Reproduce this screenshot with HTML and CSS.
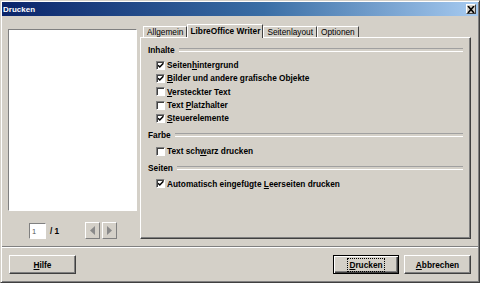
FILE: index.html
```html
<!DOCTYPE html>
<html lang="de">
<head>
<meta charset="utf-8">
<title>Drucken</title>
<link rel="stylesheet" href="styles.css">
</head>
<body>
<div class="window">
  <div class="titlebar">
    <span class="title">Drucken</span>
    <span class="close"><svg width="8" height="7" viewBox="0 0 8 7"><path d="M1 0l6 7M7 0l-6 7" stroke="#000" stroke-width="1.6"/></svg></span>
  </div>
  <div class="main">
    <div class="left">
      <div class="preview"></div>
      <div class="pager">
        <span class="pageinput">1</span>
        <span class="pagecount">/ 1</span>
        <span class="navbtn"><svg width="5" height="9" viewBox="0 0 5 9"><path d="M5 0v9L0 4.5z" fill="#8a8a8a"/></svg></span>
        <span class="navbtn"><svg width="5" height="9" viewBox="0 0 5 9"><path d="M0 0v9L5 4.5z" fill="#8a8a8a"/></svg></span>
      </div>
    </div>
    <div class="right">
      <div class="tabs">
        <span class="tab">Allgemein</span>
        <span class="tab active">LibreOffice Writer</span>
        <span class="tab">Seitenlayout</span>
        <span class="tab">Optionen</span>
      </div>
      <div class="panel">
        <div class="section">
          <div class="heading">Inhalte</div>
          <div class="row"><span class="cb checked"></span><span>Seiten<u>h</u>intergrund</span></div>
          <div class="row"><span class="cb checked"></span><span><u>B</u>ilder und andere grafische Objekte</span></div>
          <div class="row"><span class="cb"></span><span><u>V</u>ersteckter Text</span></div>
          <div class="row"><span class="cb"></span><span>Text <u>P</u>latzhalter</span></div>
          <div class="row"><span class="cb checked"></span><span><u>S</u>teuerelemente</span></div>
        </div>
        <div class="section">
          <div class="heading">Farbe</div>
          <div class="row"><span class="cb"></span><span>Text sch<u>w</u>arz drucken</span></div>
        </div>
        <div class="section">
          <div class="heading">Seiten</div>
          <div class="row"><span class="cb checked"></span><span>Automatisch eingefügte <u>L</u>eerseiten drucken</span></div>
        </div>
      </div>
    </div>
  </div>
  <div class="separator"></div>
  <div class="buttons">
    <span class="btn"><span><u>H</u>ilfe</span></span>
    <span class="spacer"></span>
    <span class="btn default"><span class="focus"><u>D</u>rucken</span></span>
    <span class="btn"><span><u>A</u>bbrechen</span></span>
  </div>
</div>
</body>
</html>
```
FILE: styles.css
```css
* { box-sizing: border-box; }
html, body { margin: 0; padding: 0; }
body {
  width: 480px;
  height: 283px;
  overflow: hidden;
  background: #d4d0c8;
  font-family: "Liberation Sans", Arial, sans-serif;
  font-size: 8.3px;
  color: #000;
}
.window {
  width: 480px;
  height: 283px;
  background: #d4d0c8;
  border: 1px solid;
  border-color: #d4d0c8 #404040 #404040 #d4d0c8;
  box-shadow: inset 1px 1px #fff, inset -1px -1px #808080;
  padding: 1px;
  display: flex;
  flex-direction: column;
}
.titlebar {
  height: 14px;
  background: linear-gradient(to right, #0a246a, #3a6ea5 55%, #a6caf0);
  display: flex;
  align-items: center;
  padding: 0 2px 0 1px;
}
.title {
  color: #fff;
  font-weight: bold;
  font-size: 8px;
  flex: 1;
}
.close {
  width: 10px;
  height: 10px;
  background: #d4d0c8;
  border: 1px solid;
  border-color: #fff #404040 #404040 #fff;
  display: flex;
  align-items: center;
  justify-content: center;
}
.main {
  display: flex;
  padding: 8px 0 0 6px;
  height: 223px;
}
.left {
  width: 129px;
  margin-top: 5px;
}
.preview {
  height: 182px;
  background: #fff;
  border: 1px solid;
  border-color: #808080 #fff #fff #808080;
}
.pager {
  display: flex;
  align-items: center;
  margin-top: 11px;
  padding-left: 21px;
  height: 17px;
}
.pageinput {
  width: 17px;
  height: 16px;
  background: #fff;
  border: 1px solid;
  border-color: #808080 #fff #fff #808080;
  font-size: 7.5px;
  color: #555;
  padding: 3px 0 0 2px;
}
.pagecount {
  font-weight: bold;
  margin-left: 4px;
  width: 35px;
}
.navbtn {
  width: 15px;
  height: 17px;
  border: 1px solid;
  border-color: #fff #808080 #808080 #fff;
  display: flex;
  align-items: center;
  justify-content: center;
  margin-right: 2px;
}
.right {
  width: 331px;
  margin-left: 3px;
  display: flex;
  flex-direction: column;
}
.tabs {
  display: flex;
  align-items: flex-end;
  height: 13px;
  padding-left: 3px;
}
.tab {
  height: 11px;
  padding: 0 3px;
  border-top: 1px solid #fff;
  border-left: 1px solid #fff;
  border-right: 1px solid #404040;
  line-height: 10px;
  white-space: nowrap;
}
.tab.active {
  height: 14px;
  font-weight: bold;
  position: relative;
  z-index: 1;
  margin-bottom: -1px;
  background: #d4d0c8;
  line-height: 12px;
  padding: 0 2px 0 2px;
}
.panel {
  height: 202px;
  border: 1px solid;
  border-color: #fff #404040 #404040 #fff;
  box-shadow: inset -1px -1px #808080;
  padding: 5px 7px 0 7px;
}
.section + .section { margin-top: 4px; }
.heading {
  display: flex;
  align-items: center;
  height: 13px;
  font-weight: bold;
  margin-bottom: 2.5px;
}
.heading::after {
  content: "";
  flex: 1;
  height: 2px;
  border-top: 1px solid #a0a0a0;
  border-bottom: 1px solid #fff;
  margin-left: 4px;
}
.row {
  display: flex;
  align-items: center;
  height: 13.3px;
  padding-left: 8px;
  font-weight: bold;
  white-space: nowrap;
}
.cb {
  width: 9px;
  height: 9px;
  background: #fff;
  border: 1px solid;
  border-color: #808080 #fff #fff #808080;
  box-shadow: inset 1px 1px #404040;
  margin-right: 2px;
  flex: none;
}
.cb.checked {
  background: #fff url("data:image/svg+xml;utf8,<svg xmlns='http://www.w3.org/2000/svg' width='7' height='7' viewBox='0 0 7 7'><path d='M1 3.2l1.8 1.8 3.6-3.8' fill='none' stroke='black' stroke-width='1.5'/></svg>") no-repeat 0 0;
}
u { text-decoration: underline; text-underline-offset: 1px; }
.separator {
  margin-top: 7px;
  height: 2px;
  border-top: 1px solid #808080;
  border-bottom: 1px solid #fff;
}
.buttons {
  display: flex;
  padding: 7px 7px 0 7px;
  gap: 5px;
}
.spacer { flex: 1; }
.btn {
  width: 67px;
  height: 19px;
  border: 1px solid;
  border-color: #fff #404040 #404040 #fff;
  box-shadow: inset -1px -1px #808080;
  display: flex;
  align-items: center;
  justify-content: center;
  font-weight: bold;
}
.btn.default {
  border-color: #000;
  box-shadow: inset 1px 1px #fff, inset -1px -1px #404040, inset -2px -2px #808080;
  width: 66px;
}
.focus {
  outline: 1px dotted #000;
  padding: 1px 1px;
}
```
